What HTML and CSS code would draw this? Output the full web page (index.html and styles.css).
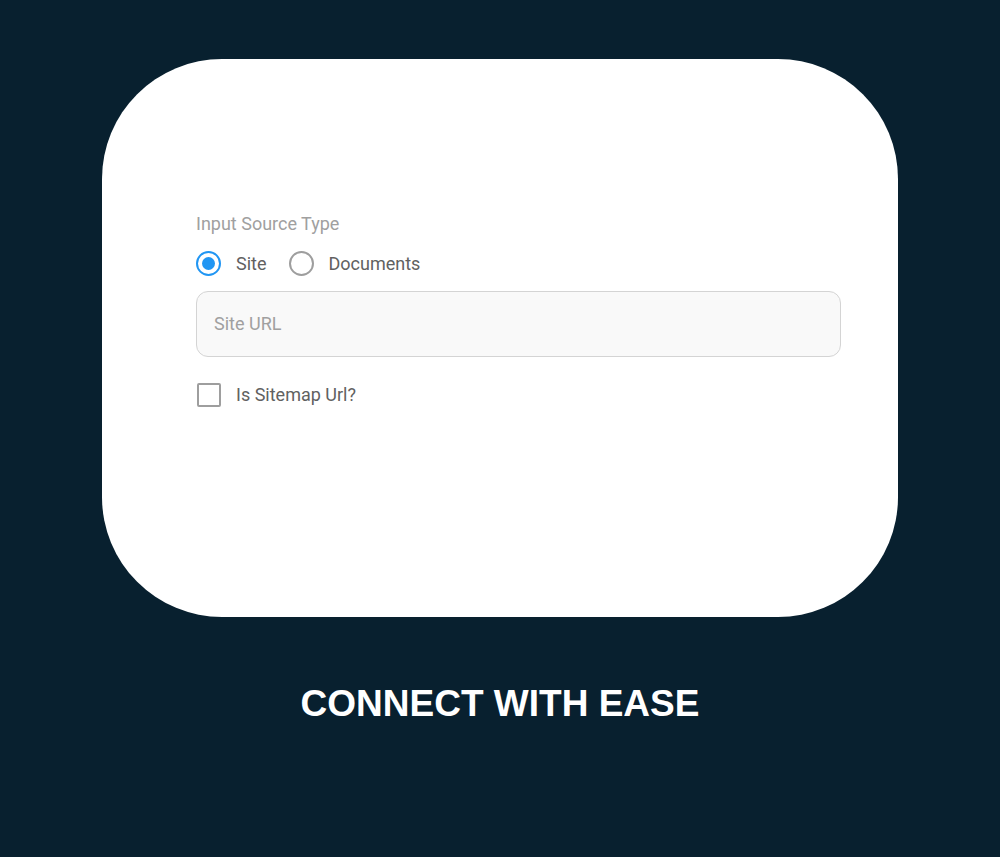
FILE: index.html
```html
<!DOCTYPE html>
<html lang="en">
<head>
<meta charset="utf-8">
<title>Connect with ease</title>
<link rel="stylesheet" href="styles.css">
</head>
<body>
<main class="page">
  <section class="card">
    <form class="form">
      <div class="label">Input Source Type</div>
      <div class="radios">
        <label class="radio-item"><span class="radio checked"><span class="dot"></span></span><span class="opt">Site</span></label>
        <label class="radio-item"><span class="radio"></span><span class="opt">Documents</span></label>
      </div>
      <div class="field"><span class="placeholder">Site URL</span></div>
      <label class="check-item"><span class="checkbox"></span><span class="opt">Is Sitemap Url?</span></label>
    </form>
  </section>
  <h1 class="title">CONNECT WITH EASE</h1>
</main>
</body>
</html>
```
FILE: styles.css
```css
html, body {
  margin: 0;
  padding: 0;
  background: #08202f;
}
.page {
  width: 1000px;
  height: 857px;
  padding-top: 59px;
  box-sizing: border-box;
  display: flex;
  flex-direction: column;
  align-items: center;
}
.card {
  width: 796px;
  height: 558px;
  background: #ffffff;
  border-radius: 120px;
  box-sizing: border-box;
  padding: 153px 0 0 94px;
  font-family: Roboto, "Liberation Sans", sans-serif;
  font-size: 18px;
  line-height: 24px;
}
.form {
  width: 645px;
  display: flex;
  flex-direction: column;
}
.label {
  color: #a0a0a0;
}
.radios {
  display: flex;
  gap: 22px;
  margin-top: 15px;
}
.radio-item, .check-item {
  display: flex;
  align-items: center;
  gap: 15px;
  color: #616161;
}
.radio {
  width: 25px;
  height: 25px;
  border: 2px solid #9e9e9e;
  border-radius: 50%;
  box-sizing: border-box;
  display: flex;
  align-items: center;
  justify-content: center;
}
.radio.checked {
  border-color: #2196f3;
}
.dot {
  width: 13px;
  height: 13px;
  border-radius: 50%;
  background: #2196f3;
}
.field {
  margin-top: 15px;
  height: 66px;
  box-sizing: border-box;
  border: 1px solid #d4d4d4;
  border-radius: 12px;
  background: #f9f9f9;
  display: flex;
  align-items: center;
  padding-left: 17px;
}
.placeholder {
  color: #a0a0a0;
}
.check-item {
  margin-top: 26px;
}
.checkbox {
  width: 24px;
  height: 24px;
  margin-left: 1px;
  border: 2px solid #9e9e9e;
  border-radius: 2px;
  box-sizing: border-box;
}
.title {
  margin: 65px 0 0;
  font-family: "Liberation Sans", Arial, sans-serif;
  font-weight: 700;
  font-size: 37px;
  line-height: 44px;
  color: #ffffff;
}
```
